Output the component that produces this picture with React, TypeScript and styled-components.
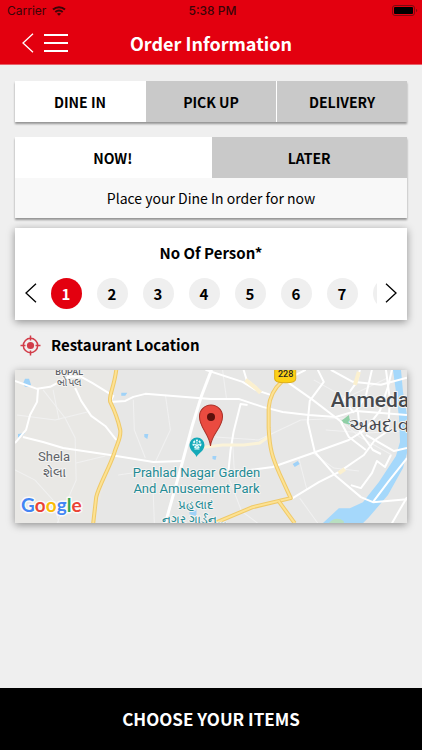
import React, { useState } from "react";
import styled, { createGlobalStyle } from "styled-components";

const GlobalStyle = createGlobalStyle`
  *, *::before, *::after { box-sizing: border-box; }
  body {
    margin: 0;
    background: #efefef;
    color: #000;
    font-family: "Noto Sans CJK SC", "Noto Sans", sans-serif;
  }
  button { font: inherit; color: inherit; border: 0; padding: 0; background: none; cursor: pointer; }
  h1, h2, p { margin: 0; }
`;

const Screen = styled.div`
  display: flex;
  flex-direction: column;
  min-height: 100vh;
`;

const Header = styled.header`
  background: #e3000f;
  color: #fff;
  border-bottom: 1px solid #e8606a;
`;

const StatusBar = styled.div`
  display: grid;
  grid-template-columns: 1fr auto 1fr;
  align-items: center;
  height: 21px;
  padding: 0 4px 0 7px;
  color: #3a0508;
  font: 12px/21px Inter, sans-serif;
`;

const Carrier = styled.span`
  display: flex;
  align-items: center;
  gap: 6px;
`;

const Clock = styled.time`
  font-weight: 500;
`;

const BatterySlot = styled.span`
  display: flex;
  justify-content: flex-end;
`;

const NavBar = styled.div`
  display: grid;
  grid-template-columns: 1fr auto 1fr;
  align-items: center;
  height: 43px;
  padding: 0 22px;
`;

const NavActions = styled.div`
  display: flex;
  align-items: center;
  gap: 10px;
`;

const IconButton = styled.button`
  display: flex;
  align-items: center;
  justify-content: center;
`;

const Title = styled.h1`
  font-size: 18px;
  line-height: 40px;
  font-weight: 700;
`;

const Content = styled.main`
  flex: 1;
  display: flex;
  flex-direction: column;
  padding: 16px 15px;
`;

const Panel = styled.section<{ $raised?: boolean }>`
  background: #fff;
  margin-bottom: ${(p) => (p.$raised ? 10 : 15)}px;
  box-shadow: ${(p) =>
    p.$raised ? "0 2px 8px rgba(0, 0, 0, 0.4)" : "0 2px 2px rgba(0, 0, 0, 0.38)"};
`;

const SlotPanel = styled(Panel)`
  margin-bottom: 10px;
`;

const Tabs = styled.div`
  display: flex;
  gap: 1px;
`;

const Tab = styled.button<{ $active: boolean }>`
  flex: 1;
  height: 41px;
  font-size: 14px;
  line-height: 40px;
  font-weight: 700;
  background: ${(p) => (p.$active ? "#fff" : "#c9c9c9")};
`;

const Note = styled.p`
  height: 40px;
  background: #f8f8f8;
  font-size: 14px;
  line-height: 40px;
  text-align: center;
`;

const PanelTitle = styled.h2`
  padding-top: 12px;
  font-size: 15px;
  line-height: 26px;
  font-weight: 700;
  text-align: center;
`;

const Stepper = styled.div`
  display: flex;
  align-items: center;
  padding: 11px 8px;
`;

const Arrow = styled(IconButton)`
  flex: 0 0 auto;
  width: 16px;
  height: 32px;
`;

const Numbers = styled.div`
  flex: 1;
  min-width: 0;
  display: flex;
  overflow: hidden;
  margin: 0 6px 0 4px;
`;

const NumberCell = styled.div`
  flex: 0 0 46px;
  display: flex;
  justify-content: center;
`;

const NumberButton = styled.button<{ $active: boolean }>`
  width: 31px;
  height: 31px;
  border-radius: 50%;
  font-size: 15px;
  line-height: 31px;
  font-weight: 700;
  background: ${(p) => (p.$active ? "#e3000f" : "#efefef")};
  color: ${(p) => (p.$active ? "#fff" : "#000")};
`;

const LocationHeading = styled.div`
  display: flex;
  align-items: center;
  gap: 10px;
  height: 30px;
  padding-left: 5px;
  margin-bottom: 10px;

  h2 {
    font-size: 15px;
    line-height: 30px;
    font-weight: 700;
  }
`;

const MapPanel = styled(Panel)`
  svg {
    display: block;
    width: 100%;
    height: 153px;
  }
`;

const Choose = styled.button`
  height: 62px;
  background: #000;
  color: #fff;
  font-size: 17px;
  line-height: 60px;
  font-weight: 700;
  text-align: center;
`;

const Wifi = () => (
  <svg width="14" height="10" viewBox="0 0 14 10" fill="none" stroke="#3a0508" strokeWidth="2" aria-hidden="true">
    <path d="M1 3.6C4.4 .4 9.6 .4 13 3.6" />
    <path d="M3.3 6.1c2.2-1.9 5.2-1.9 7.4 0" />
    <path d="M7 9.8 4.9 7.7c1.2-1 3-1 4.2 0z" fill="#3a0508" stroke="none" />
  </svg>
);

const Battery = () => (
  <svg width="26" height="12" viewBox="0 0 26 12" aria-hidden="true">
    <rect x="0.5" y="0.5" width="22" height="10" rx="2.5" fill="none" stroke="#7c0a11" />
    <rect x="2" y="2" width="19" height="7" rx="1" fill="#000" />
    <path d="M24 4c1.6.5 1.6 2.5 0 3z" fill="#7c0a11" />
  </svg>
);

const Chevron = ({ right }: { right?: boolean }) => (
  <svg width="12" height="20" viewBox="0 0 12 20" fill="none" stroke="currentColor" strokeWidth="1.3" aria-hidden="true">
    <path d={right ? "M1 .8 11 10 1 19.2" : "M11 .8 1 10l10 9.2"} />
  </svg>
);

const Burger = () => (
  <svg width="24" height="20" viewBox="0 0 24 20" stroke="#fff" strokeWidth="2" aria-hidden="true">
    <path d="M0 2h24M0 10h24M0 18h24" />
  </svg>
);

const Target = () => (
  <svg width="21" height="21" viewBox="0 0 21 21" fill="none" stroke="#d23c49" strokeWidth="1.5" aria-hidden="true">
    <circle cx="10.5" cy="10.5" r="7.2" />
    <circle cx="10.5" cy="10.5" r="3.6" fill="#d23c49" stroke="none" />
    <path d="M10.5 .5v5M10.5 15.5v5M.5 10.5h5M15.5 10.5h5" />
  </svg>
);

const MINOR_ROADS = [
  "M2 45 40 50 72 42",
  "M28 20 50 48 60 68 61 110 42 153",
  "M38 20 44 50",
  "M103 105 137 100 139 153",
  "M61 93 90 86",
  "M118 30 119 60 130 88",
  "M0 100 20 110 38 130 44 153",
  "M150 25 155 60 140 92",
  "M207 0 211 29",
  "M200 67 243 70 285 50 335 48",
  "M217 70 219 106",
  "M283 88 291 119",
  "M310 60 350 63 391 61",
  "M298 10 330 28 372 8",
  "M297 83 318 98 343 101",
  "M213 107 226 141 242 153",
  "M284 128 302 153",
  "M320 47 344 67 376 85",
];

const ROADS = [
  "M0 11 22 19 35 17 52 8 58 0",
  "M52 7 66 7 77 13 98 26 95 32 110 31 118 27 130 24 195 29 223 29 247 37 267 42 293 45 320 47 340 41 391 45",
  "M60 18 66 31 76 46 90 56 101 70",
  "M23 19 22 32 15 45 11 60 0 73",
  "M8 67 28 72 48 78 95 85 138 92 167 91",
  "M218 102 257 97 297 83 333 70 349 60 364 41 372 17 376 0",
  "M190 0 227 12 240 20 255 25",
  "M213 100 215 80 218 62 225 34 232 35",
  "M273 13 297 30 327 53",
  "M302 0 308 12 294 31 292 52 299 82 320 106 345 127 357 132 391 129",
  "M277 128 303 112 323 102 348 85 359 70 372 61",
  "M272 9 286 2 290 0",
  "M338 43 328 30 341 12 344 0",
  "M340 41 350 26 356 0",
  "M342 41 344 62 357 80 365 84",
  "M315 0 337 12 365 15 391 8",
  "M350 65 378 81 391 78",
  "M325 52 333 67 350 80",
  "M335 115 345 118 356 103 361 91 369 97 375 85",
  "M370 0 374 30 372 60",
  "M357 132 372 112 391 88",
  "M376 153 391 127",
  "M228 0 231 10 241 18",
];

const HIGHWAYS = [
  "M101 0C99 17 93 27 95 32c5 10 8 19 10 28 1 8-3 13-6 23C94 98 83 117 81 127L78 153",
  "M266 12C258 19 254 28 253 38V58c1 22 4 30 11 46l11 24-38 9-38 16",
  "M263 131 279 153",
];

const LOGO = [
  ["G", "#4285f4"],
  ["o", "#ea4335"],
  ["o", "#fbbc05"],
  ["g", "#4285f4"],
  ["l", "#34a853"],
  ["e", "#ea4335"],
];

const MapDrawing = () => (
  <svg viewBox="0 0 391 153" preserveAspectRatio="xMidYMid slice" role="img" aria-label="Restaurant map" fontFamily="Roboto, sans-serif">
    <rect width="391" height="153" fill="#e7e7e6" />
    <path d="M0 0H101L95 30 105 62 78 153H0z" fill="#e9e8e5" />
    <g fill="none" stroke="#f1f1f1" strokeWidth="1">
      {MINOR_ROADS.map((d) => (
        <path key={d} d={d} />
      ))}
    </g>
    <path
      d="M377 0 380 22 383 47 384 72 380 86 363 112 347 132 334 138 323 138 307 153H347L353 147 372 125 387 98 391 83V45L387 22 385 0z"
      fill="#a5d8fb"
    />
    <path d="M313 153c4-5 10-6 15-2v2z" fill="#b8dfc0" />
    <path d="M324 52 333 45 335 55z" fill="#8fcfa5" />
    <g fill="#9fd2f8">
      <path d="M10 9l4 0 2 6-2 2h-4l-2-3z" />
      <path d="M106 23h6l-2 3h-4zM3 64l7-1-3 3-4 2zM129 64l4 0-1 5-3-2zM277 94l5-3 2 3-5 3zM174 139h7v7l-7-2zM197 86h4l-1 4-3-1z" />
    </g>
    <g fill="none" stroke="#fff" strokeWidth="2" strokeLinejoin="round">
      {ROADS.map((d) => (
        <path key={d} d={d} />
      ))}
    </g>
    <path d="M196 0 186 26 177 55 167 92 150 153" fill="none" stroke="#fff" strokeWidth="3" />
    <path d="M181 78 207 75 228 75 244 73 254 66" fill="none" stroke="#fbf3d8" strokeWidth="3" />
    <path d="M230 10 240 18 245 23M343 2 339 15M323 103 329 99" fill="none" stroke="#fbf0cf" strokeWidth="4" />
    <g fill="none" strokeLinejoin="round">
      {HIGHWAYS.map((d) => (
        <g key={d}>
          <path d={d} stroke="#efc968" strokeWidth="4" />
          <path d={d} stroke="#fde293" strokeWidth="2" />
        </g>
      ))}
    </g>
    <path d="M259-3h21v12c0 3-4 4-10 4S259 12 259 9z" fill="#fcd116" stroke="#dcae1c" />
    <text x="270" y="7" fontSize="9" fontWeight="500" textAnchor="middle" fill="#222">228</text>

    <g fill="#5f6368" textAnchor="middle" stroke="#f4f4f3" strokeWidth="2" paintOrder="stroke" strokeLinejoin="round">
      <text x="54" y="5" fontSize="9" fontWeight="500">BOPAL</text>
      <text x="54" y="16" fontSize="10">બોપલ</text>
      <text x="39" y="91" fontSize="13">Shela</text>
      <text x="39" y="107" fontSize="13">શેલા</text>
    </g>
    <g fill="#45484d" stroke="#f4f4f3" strokeWidth="2" paintOrder="stroke" strokeLinejoin="round">
      <text x="315" y="37" fontSize="21" fontWeight="500">Ahmedabad</text>
      <text x="333" y="62" fontSize="19">અમદાવાદ</text>
    </g>
    <g fill="#238a94" textAnchor="middle" stroke="#f4f4f3" strokeWidth="2" paintOrder="stroke" strokeLinejoin="round">
      <text x="181" y="107" fontSize="13">Prahlad Nagar Garden</text>
      <text x="181" y="123" fontSize="13">And Amusement Park</text>
      <text x="181" y="139" fontSize="12">પ્રહલાદ</text>
      <text x="179" y="154" fontSize="12">નગર ગાર્ડન...</text>
    </g>

    <path d="M181 87c-1-4-7-6-7-12a7 7 0 1 1 15 0c0 6-6 8-8 12z" fill="#13a9b8" />
    <g stroke="#e8fbfc" strokeWidth="1" fill="none">
      <circle cx="181.5" cy="74" r="3.5" strokeWidth="2" strokeDasharray="2 1" />
      <path d="M181.5 72v7M179 74l2.500 2 2.500-2M179 79h5" />
    </g>
    <path d="M195 76c-1-12-11-18-11-29.500a11.500 11.500 0 0 1 23 0C207 58 196 64 195 76z" fill="#ea4b40" stroke="#a93027" />
    <circle cx="195.5" cy="47" r="4" fill="#5c100c" />

    <text
      x="6"
      y="142"
      fontFamily="Lato, sans-serif"
      fontSize="19"
      fontWeight="700"
      stroke="#fff"
      strokeOpacity="0.8"
      strokeWidth="3"
      strokeLinejoin="round"
      paintOrder="stroke"
    >
      {LOGO.map(([letter, color], i) => (
        <tspan key={i} fill={color}>{letter}</tspan>
      ))}
    </text>
  </svg>
);

const SERVICES = ["DINE IN", "PICK UP", "DELIVERY"];
const TIMES = ["NOW!", "LATER"];
const PEOPLE = [1, 2, 3, 4, 5, 6, 7, 8];

export default function App() {
  const [service, setService] = useState(SERVICES[0]);
  const [time, setTime] = useState(TIMES[0]);
  const [people, setPeople] = useState(1);

  return (
    <Screen>
      <GlobalStyle />
      <Header>
        <StatusBar>
          <Carrier>
            Carrier <Wifi />
          </Carrier>
          <Clock>5:38 PM</Clock>
          <BatterySlot>
            <Battery />
          </BatterySlot>
        </StatusBar>
        <NavBar>
          <NavActions>
            <IconButton aria-label="Back">
              <Chevron />
            </IconButton>
            <IconButton aria-label="Menu">
              <Burger />
            </IconButton>
          </NavActions>
          <Title>Order Information</Title>
        </NavBar>
      </Header>

      <Content>
        <Panel>
          <Tabs>
            {SERVICES.map((s) => (
              <Tab key={s} $active={s === service} aria-pressed={s === service} onClick={() => setService(s)}>
                {s}
              </Tab>
            ))}
          </Tabs>
        </Panel>

        <SlotPanel>
          <Tabs>
            {TIMES.map((t) => (
              <Tab key={t} $active={t === time} aria-pressed={t === time} onClick={() => setTime(t)}>
                {t}
              </Tab>
            ))}
          </Tabs>
          <Note>Place your Dine In order for now</Note>
        </SlotPanel>

        <Panel $raised>
          <PanelTitle>No Of Person*</PanelTitle>
          <Stepper>
            <Arrow aria-label="Fewer people" onClick={() => setPeople(Math.max(1, people - 1))}>
              <Chevron />
            </Arrow>
            <Numbers>
              {PEOPLE.map((n) => (
                <NumberCell key={n}>
                  <NumberButton $active={n === people} aria-pressed={n === people} onClick={() => setPeople(n)}>
                    {n}
                  </NumberButton>
                </NumberCell>
              ))}
            </Numbers>
            <Arrow aria-label="More people" onClick={() => setPeople(Math.min(8, people + 1))}>
              <Chevron right />
            </Arrow>
          </Stepper>
        </Panel>

        <LocationHeading>
          <Target />
          <h2>Restaurant Location</h2>
        </LocationHeading>
        <MapPanel $raised>
          <MapDrawing />
        </MapPanel>
      </Content>

      <Choose>CHOOSE YOUR ITEMS</Choose>
    </Screen>
  );
}
